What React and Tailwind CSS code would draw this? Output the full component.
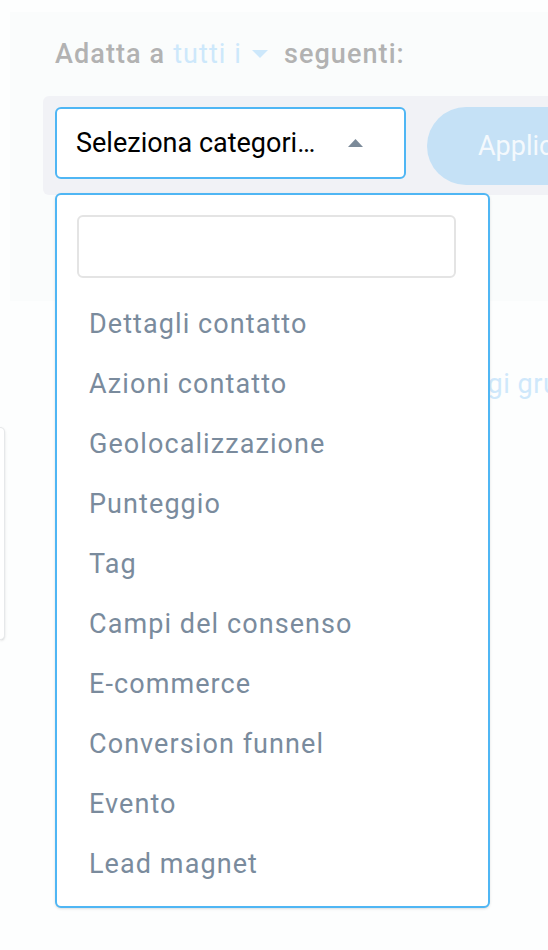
import { useState } from "react";

const categories = [
  "Dettagli contatto",
  "Azioni contatto",
  "Geolocalizzazione",
  "Punteggio",
  "Tag",
  "Campi del consenso",
  "E-commerce",
  "Conversion funnel",
  "Evento",
  "Lead magnet"
];

export default function App() {
  const [query, setQuery] = useState("");

  return (
    <div
      className="min-h-[950px] w-[548px] overflow-hidden bg-[#fdfefe]"
      style={{ fontFamily: "Roboto, 'Liberation Sans', sans-serif" }}
    >
      <section className="ml-[10px] mt-[12px] h-[289px] bg-[#fafcfc] pl-[33px] pt-[28px]">
        <p className="ml-[12px] flex items-center whitespace-nowrap text-[27px] font-medium leading-[28px] tracking-[0.04em] text-[#b2b2b2]">
          <span>Adatta a</span>
          <span className="ml-[8px] font-normal text-[#cde8fb]">tutti i</span>
          <svg width="16" height="8" viewBox="0 0 16 8" className="ml-[10px]">
            <path d="M0 0 L16 0 L8 8 Z" fill="#cde8fb" />
          </svg>
          <span className="ml-[16px]">seguenti:</span>
        </p>

        <div className="mt-[28px] flex w-[600px] items-start rounded-[6px] bg-[#f1f2f6] pb-[10px] pl-[12px] pt-[11px]">
          <div className="relative">
            <button className="flex h-[72px] w-[351px] items-center justify-between whitespace-nowrap rounded-[6px] border-2 border-[#4fb6f4] bg-white pl-[19px] pr-[41px] text-[27px] text-black">
              <span>Seleziona categori…</span>
              <svg width="15" height="8" viewBox="0 0 15 8">
                <path d="M0 8 L7.5 0 L15 8 Z" fill="#7b8a99" />
              </svg>
            </button>

            <div className="absolute left-0 top-[86px] z-10 w-[435px] rounded-[6px] border-2 border-[#4fb6f4] bg-white pb-[12px] pl-[20px] pt-[20px] shadow-sm">
              <input
                value={query}
                onChange={(e) => setQuery(e.target.value)}
                className="h-[63px] w-[379px] rounded-[6px] border-2 border-[#e4e4e4] bg-white px-3 outline-none"
              />
              <ul className="mt-[16px]">
                {categories.map((c) => (
                  <li
                    key={c}
                    className="h-[60px] pl-[12px] text-[27px] leading-[60px] tracking-[0.04em] text-[#7a8b9d]"
                  >
                    {c}
                  </li>
                ))}
              </ul>
            </div>
          </div>

          <button className="ml-[21px] h-[78px] w-[200px] shrink-0 whitespace-nowrap rounded-full bg-[#c5e1f6] pl-[51px] text-left text-[27px] text-[#f4f9fd]">
            Applica
          </button>
        </div>
      </section>

      <div className="mt-[68px] whitespace-nowrap pl-[400px] text-[27px] leading-[30px] tracking-[0.02em] text-[#cfe8fb]">
        Aggiungi gruppo
      </div>

      <div className="mt-[28px] h-[213px] w-[5px] rounded-r-[6px] border border-l-0 border-[#e6e8ea] bg-white shadow-sm" />
    </div>
  );
}
